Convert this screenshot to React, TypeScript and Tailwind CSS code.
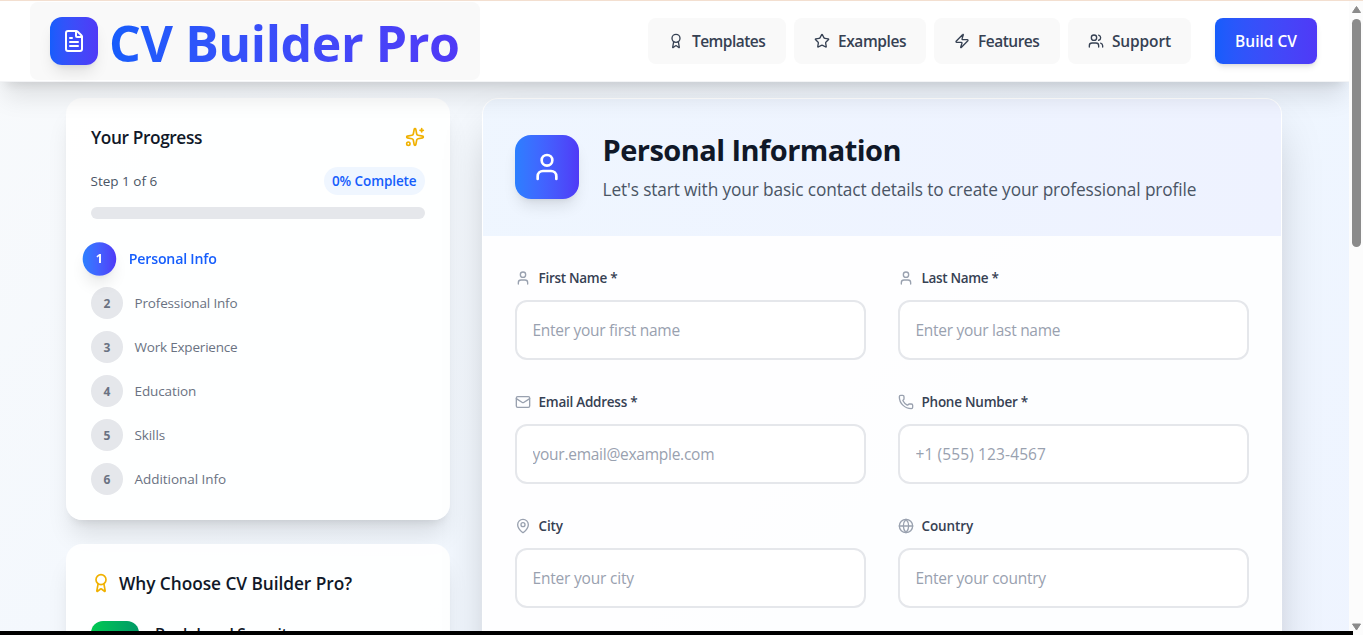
import type { ReactNode } from "react";
import { Award, FileText, Globe, Mail, MapPin, Phone, Shield, Sparkles, Star, User, Users, Zap, type LucideIcon } from "lucide-react";

type NavItem = { label: string; icon: LucideIcon; width: string; text: string };

const navItems: NavItem[] = [
  { label: "Templates", icon: Award, width: "w-[138px]", text: "tracking-[-0.54px]" },
  { label: "Examples", icon: Star, width: "w-[132px]", text: "tracking-[-0.42px]" },
  { label: "Features", icon: Zap, width: "w-[126px]", text: "tracking-[-0.5px]" },
  { label: "Support", icon: Users, width: "w-[123px]", text: "tracking-[-0.15px]" },
];

const steps = [
  { label: "Personal Info", text: "tracking-[-0.2px]" },
  { label: "Professional Info", text: "tracking-[-0.16px]" },
  { label: "Work Experience", text: "tracking-[-0.2px]" },
  { label: "Education", text: "tracking-[-0.1px]" },
  { label: "Skills", text: "tracking-[-0.1px]" },
  { label: "Additional Info", text: "tracking-[-0.04px]" },
];

type Field = { label: string; placeholder: string; icon: LucideIcon; labelText: string; inputText: string };

const fields: Field[] = [
  { label: "First Name *", placeholder: "Enter your first name", icon: User, labelText: "tracking-[-0.28px]", inputText: "tracking-[-0.28px]" },
  { label: "Last Name *", placeholder: "Enter your last name", icon: User, labelText: "tracking-[-0.32px]", inputText: "tracking-[-0.28px]" },
  { label: "Email Address *", placeholder: "your.email@example.com", icon: Mail, labelText: "tracking-[-0.25px]", inputText: "tracking-[-0.26px]" },
  { label: "Phone Number *", placeholder: "+1 (555) 123-4567", icon: Phone, labelText: "tracking-[-0.25px]", inputText: "tracking-[0.12px]" },
  { label: "City", placeholder: "Enter your city", icon: MapPin, labelText: "tracking-[-0.1px]", inputText: "tracking-[-0.2px]" },
  { label: "Country", placeholder: "Enter your country", icon: Globe, labelText: "tracking-[-0.1px]", inputText: "tracking-[-0.27px]" },
];

function Header() {
  return (
    <header className="relative z-10 flex h-[82px] shrink-0 items-center justify-between border-t border-b border-t-[#f3dfd0] border-b-gray-100 bg-white pr-8 pl-[30px] shadow-[0_20px_25px_-5px_rgb(0_0_0/0.1),0_8px_10px_-6px_rgb(0_0_0/0.1)]">
      <div className="flex h-[78px] w-[450px] items-center gap-[11px] rounded-lg bg-[#f9f9f9] px-5">
        <div className="flex size-12 shrink-0 items-center justify-center rounded-xl bg-linear-to-r from-blue-600 to-indigo-600 shadow-lg">
          <FileText className="size-6 text-white" />
        </div>
        <span className="bg-linear-to-r from-blue-600 to-indigo-600 bg-clip-text pt-[3px] text-[50px] leading-[72px] font-bold tracking-[-0.4px] whitespace-nowrap text-transparent">
          CV Builder Pro
        </span>
      </div>
      <nav className="flex items-center gap-2">
        {navItems.map(({ label, icon: Icon, width, text }) => (
          <a key={label} className={`flex h-[46px] items-center gap-2 rounded-lg bg-[#f9f9f9] pl-5 text-[15.5px] font-semibold text-gray-700 ${width}`}>
            <Icon className="size-4 shrink-0" />
            <span className={`pt-0.5 ${text}`}>{label}</span>
          </a>
        ))}
        <button className="ml-4 h-[46px] w-[102px] rounded-lg bg-linear-to-r from-blue-600 to-indigo-600 pt-0.5 text-[15.5px] font-semibold whitespace-nowrap text-white shadow-md">
          Build CV
        </button>
      </nav>
    </header>
  );
}

function Card({ children }: { children: ReactNode }) {
  return <section className="rounded-2xl border border-white/20 bg-white/90 p-6 shadow-xl">{children}</section>;
}

function Progress() {
  return (
    <Card>
      <div className="mb-4 flex h-7 items-center justify-between">
        <h3 className="pt-0.5 text-[17.3px] font-semibold tracking-[-0.4px] text-gray-900">Your Progress</h3>
        <Sparkles className="size-5 text-[#f0b100]" />
      </div>
      <div className="mb-3 flex items-center justify-between text-[13.5px] leading-5">
        <span className="-ml-[0.5px] text-gray-600">Step 1 of 6</span>
        <span className="w-[101px] rounded-full bg-blue-50 px-2 py-1 font-semibold tracking-[-0.1px] whitespace-nowrap text-blue-600">0% Complete</span>
      </div>
      <div className="mb-6 h-3 rounded-full bg-gray-200" />
      <ol className="flex flex-col gap-3">
        {steps.map(({ label, text }, i) => (
          <li key={label} className={i === 0 ? "flex scale-105 items-center gap-3" : "flex items-center gap-[11.5px]"}>
            <span
              className={
                i === 0
                  ? "flex size-8 items-center justify-center rounded-full bg-linear-to-r from-blue-500 to-indigo-600 text-xs font-bold text-white shadow-lg"
                  : "flex size-8 items-center justify-center rounded-full bg-gray-200 pt-px text-xs font-bold text-gray-500"
              }
            >
              {i + 1}
            </span>
            <span className={`text-[13.5px] leading-5 ${i === 0 ? "font-semibold text-blue-600" : "text-gray-500"} ${text}`}>{label}</span>
          </li>
        ))}
      </ol>
    </Card>
  );
}

function Reasons() {
  return (
    <Card>
      <div className="mb-6 flex h-7 items-center gap-2">
        <Award className="size-5 text-[#f0b100]" />
        <h3 className="pt-0.5 text-[17.3px] font-semibold tracking-[-0.05px] text-gray-900">Why Choose CV Builder Pro?</h3>
      </div>
      <div className="flex gap-4">
        <div className="flex size-12 items-center justify-center rounded-xl bg-linear-to-r from-[#00c950] to-[#009966] shadow-lg">
          <Shield className="size-6 text-white" />
        </div>
        <span className="pt-px text-[15.5px] leading-6 font-semibold tracking-[-0.32px] text-gray-900">Bank-Level Security</span>
      </div>
    </Card>
  );
}

function PersonalForm() {
  return (
    <section className="h-[900px] w-[800px] shrink-0 overflow-hidden rounded-2xl border border-white bg-white/90 shadow-2xl">
      <div className="flex h-[137px] items-start gap-6 bg-linear-to-r from-blue-50 to-indigo-50 px-8 pt-8">
        <div className="mt-1 flex size-16 items-center justify-center rounded-2xl bg-linear-to-r from-blue-500 to-indigo-600 shadow-lg">
          <User className="size-8 text-white" />
        </div>
        <div className="-ml-[0.5px] pt-px">
          <h2 className="mb-[7px] text-[29px] leading-9 font-bold tracking-[-0.54px] text-gray-900">Personal Information</h2>
          <p className="text-[17.3px] leading-[29px] tracking-[-0.125px] text-gray-600">
            Let's start with your basic contact details to create your professional profile
          </p>
        </div>
      </div>
      <div className="grid grid-cols-2 gap-8 p-8">
        {fields.map(({ label, placeholder, icon: Icon, labelText, inputText }) => (
          <label key={label} className="block">
            <span className="mb-3 flex h-5 items-center gap-[7.5px]">
              <Icon className="size-4 text-gray-400" />
              <span className={`text-[13.5px] font-semibold text-gray-700 ${labelText}`}>{label}</span>
            </span>
            <input
              placeholder={placeholder}
              className={`h-[60px] w-full rounded-xl border-2 border-gray-200 bg-white px-[15.5px] text-[15.5px] placeholder:text-gray-400 ${inputText}`}
            />
          </label>
        ))}
      </div>
    </section>
  );
}

function Scrollbar() {
  return (
    <div className="flex w-[14px] shrink-0 flex-col items-center border-t border-t-[#f3dfd0] bg-[#fcfcfc]">
      <svg className="mt-[5px] h-[7px] w-[9px]" viewBox="0 0 9 7">
        <path d="M4.5 0.5 8.5 6.5H0.5Z" fill="#8b8b8b" stroke="#8b8b8b" strokeLinejoin="round" />
      </svg>
      <div className="mt-[6px] h-[228px] w-[9px] rounded-full bg-[#8b8b8b]" />
      <svg className="mt-auto mb-1 h-[8px] w-[9px]" viewBox="0 0 9 8">
        <path d="M0.5 1H8.5L4.5 7Z" fill="#8b8b8b" stroke="#8b8b8b" strokeLinejoin="round" />
      </svg>
    </div>
  );
}

export default function App() {
  return (
    <div className="relative flex h-[635px] w-[1363px] overflow-hidden font-['Open_Sans','Noto_Sans',sans-serif]">
      <div className="flex h-full w-[1349px] flex-col overflow-hidden bg-linear-to-br from-slate-50 via-blue-50 to-indigo-50 bg-[length:1349px_1500px] bg-no-repeat">
        <Header />
        <main className="flex min-h-0 flex-1 items-start gap-8 pt-4 pl-[66px]">
          <aside className="flex w-96 shrink-0 flex-col gap-6">
            <Progress />
            <Reasons />
          </aside>
          <PersonalForm />
        </main>
      </div>
      <Scrollbar />
      <div className="absolute bottom-0 left-0 z-20 h-1 w-[1353px] bg-black" />
    </div>
  );
}
